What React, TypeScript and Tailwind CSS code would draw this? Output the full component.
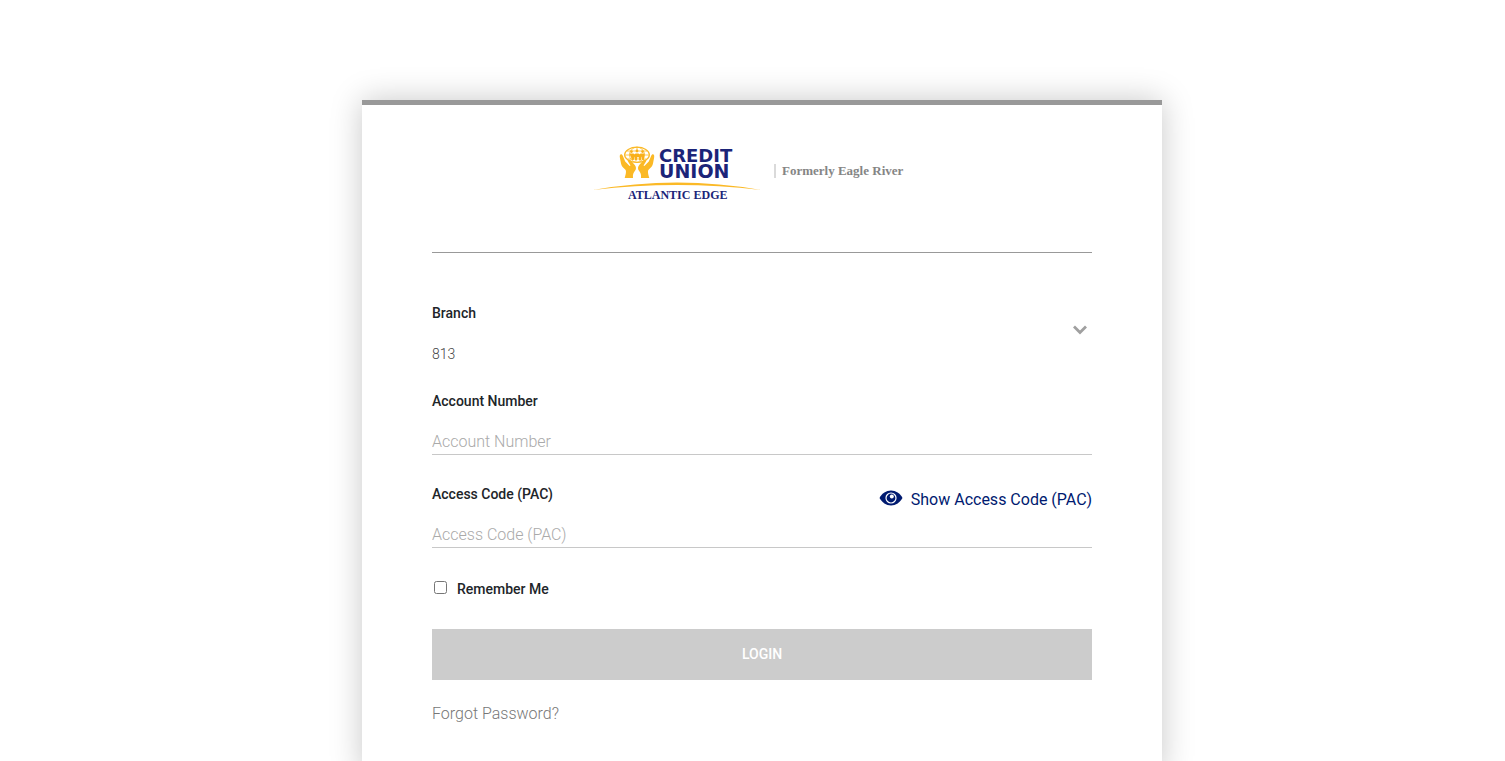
import * as React from "react";

const HAND =
  "M28.900 14.200c-1.200.2-1.300 1.800-1 3.600l1.100 5.800c.5 2.500 1.900 4.200 4.200 5.900 1.200 1 1 3.600-.5 8.500h8.300c-.4-3.600.5-5.200 2-7.200 1.400-1.900 1.300-4-.2-5.900l-4.300-4.600c-1.500-1.400-3.400-.5-2.500 1.100l2.500 4-.9.700-4.400-4.600-2.300-5.600c-.5-1.200-1.200-1.800-2-1.700z";

const Logo = () => (
  <svg
    aria-label="Credit Union Atlantic Edge, formerly Eagle River"
    className="h-[70px] w-[340px]"
    role="img"
    viewBox="0 0 340 70"
  >
    <g fill="none" stroke="#fbb926">
      <ellipse cx="45" cy="14.800" rx="12.400" ry="7.600" strokeWidth="1.200" />
      <ellipse cx="45" cy="14.800" rx="7.500" ry="7.600" strokeWidth=".8" />
      <path d="M45 7v4M35 11h20M33 15h24M35.500 19h19" strokeWidth=".8" />
    </g>
    <g fill="#f9b01a">
      <circle cx="39.500" cy="11.600" r="1.300" />
      <circle cx="45" cy="11" r="1.400" />
      <circle cx="50.500" cy="11.600" r="1.300" />
      <path d="M37.500 13.500h4l1 1 1-1h3l1 1 1-1h4l-.6 6.500h-1.600l-.7-3.500-.8 4h-1.600l-.6-3.500h-1.200l-.6 3.500h-1.600l-.8-4-.7 3.500h-1.600z" />
    </g>
    <path d={HAND} fill="#fbb926" />
    <path d={HAND} fill="#fbb926" transform="matrix(-1 0 0 1 90 0)" />
    <g fill="#1b2478" fontFamily="'DejaVu Sans', sans-serif" fontWeight="700">
      <text x="67" y="22" fontSize="18">
        CREDIT
      </text>
      <text x="67" y="38" fontSize="19">
        UNION
      </text>
    </g>
    <path d="M1 50Q85 35 169 50Q85 40 1 50z" fill="#fbb926" />
    <text
      x="36"
      y="59"
      fill="#1b2478"
      fontFamily="'Liberation Serif', serif"
      fontSize="12"
      fontWeight="700"
    >
      ATLANTIC EDGE
    </text>
    <path d="M183 24v14" stroke="#b5b5b5" />
    <text
      x="190"
      y="35"
      fill="#858585"
      fontFamily="'Liberation Serif', serif"
      fontSize="13"
      fontWeight="700"
    >
      Formerly Eagle River
    </text>
  </svg>
);

const EyeIcon = () => (
  <svg aria-hidden="true" className="mb-1 h-4 w-6" viewBox="0 0 24 16">
    <path d="M.5 8C3 3.500 7.200.6 12 .6s9 2.900 11.500 7.400C21 12.500 16.800 15.400 12 15.400S3 12.500.5 8z" fill="#001a70" />
    <circle cx="12" cy="8" r="5" fill="none" stroke="#fff" strokeWidth="1.200" />
    <circle cx="12.800" cy="6.600" r="2" fill="#fff" />
  </svg>
);

const labelClass = "block text-sm leading-5 font-medium text-[#212529]";
const inputClass =
  "mt-5 block h-6 w-full border-b border-[#c8c8c8] bg-transparent pb-0.5 text-base font-light text-[#555] outline-none placeholder:text-[#aaa]";

const App = () => {
  const [showCode, setShowCode] = React.useState(false);

  return (
    <div className="flex justify-center bg-white pt-[100px] pl-[19px] font-[Roboto,sans-serif]">
      <main className="w-full max-w-[800px] border-t-[5px] border-[#999] bg-white px-[70px] pt-[35px] pb-12 shadow-[0_0_30px_rgba(0,0,0,0.22)]">
        <header className="flex justify-center border-b border-[#999] pb-[42px]">
          <Logo />
        </header>
        <form className="pt-[50px]" onSubmit={(e) => e.preventDefault()}>
          <div className="relative">
            <label className={labelClass} htmlFor="branch">
              Branch
            </label>
            <select
              className="mt-5 block h-[22px] w-full appearance-none bg-transparent text-sm font-light text-[#444] outline-none"
              defaultValue="813"
              id="branch"
            >
              <option value="813">813</option>
            </select>
            <svg
              aria-hidden="true"
              className="pointer-events-none absolute top-5 right-1 h-4 w-4"
              fill="none"
              viewBox="0 0 16 16"
            >
              <path d="M2 3.500l6 6 6-6" stroke="#a0a0a0" strokeWidth="2.800" />
            </svg>
          </div>
          <div className="mt-[26px]">
            <label className={labelClass} htmlFor="account">
              Account Number
            </label>
            <input className={inputClass} id="account" placeholder="Account Number" type="text" />
          </div>
          <div className="relative mt-[29px]">
            <label className={labelClass} htmlFor="code">
              Access Code (PAC)
            </label>
            <button
              className="absolute top-1 right-0 flex items-center gap-2 text-base text-[#001a70]"
              onClick={() => setShowCode(!showCode)}
              type="button"
            >
              <EyeIcon />
              Show Access Code (PAC)
            </button>
            <input
              className={inputClass}
              id="code"
              placeholder="Access Code (PAC)"
              type={showCode ? "text" : "password"}
            />
          </div>
          <div className="mt-[31px] flex items-start gap-2">
            <input className="mx-0.5 mt-0.5 size-[13px]" id="remember" type="checkbox" />
            <label className={labelClass} htmlFor="remember">
              Remember Me
            </label>
          </div>
          <button
            className="mt-[30px] block h-[51px] w-full bg-[#ccc] pb-0.5 text-sm font-medium text-white"
            type="submit"
          >
            LOGIN
          </button>
          <a className="mt-[22px] inline-block text-base font-light text-[#777]" href="#forgot">
            Forgot Password?
          </a>
        </form>
      </main>
    </div>
  );
};

export default App;
